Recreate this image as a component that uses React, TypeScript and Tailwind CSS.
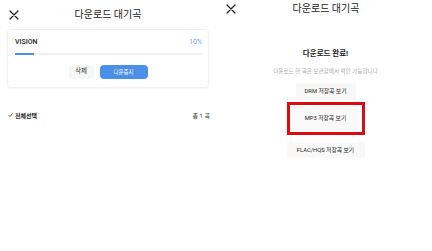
const font = "font-['Roboto','Noto_Sans_CJK_KR',sans-serif]";

function CloseIcon() {
  return (
    <svg width="10" height="10" viewBox="0 0 10 10" fill="none">
      <path d="M1 1L9 9M9 1L1 9" stroke="#222" strokeWidth="1.3" strokeLinecap="round" />
    </svg>
  );
}

function QueuePanel() {
  return (
    <div className="w-[216px] shrink-0">
      <header className="flex h-[29px] items-center pt-[1px]">
        <div className="flex w-[28px] justify-center">
          <CloseIcon />
        </div>
        <h1 className="flex-1 text-center text-[10px] leading-[12px] text-[#222]">다운로드 대기곡</h1>
        <div className="w-[28px]" />
      </header>

      <div className="mx-[7px] h-[59px] rounded-[4px] border border-[#f1f1f1] bg-white pt-[8px] shadow-[0_1px_2px_rgba(0,0,0,0.04)]">
        <div className="flex items-center justify-between pl-[7px] pr-[6px] leading-[8px]">
          <span className="text-[7px] font-medium text-[#222]">VISION</span>
          <span className="text-[7px] text-[#6aa5ef]">10%</span>
        </div>
        <div className="mx-[7px] mr-[6px] mt-[7px] h-[2px] bg-[#f0f0f0]">
          <div className="h-full w-[10%] bg-[#4b8fe8]" />
        </div>
        <div className="mt-[10px] flex justify-center gap-[6px]">
          <button className="flex h-[14px] w-[25px] items-center justify-center rounded-[3px] bg-[#f7f7f7] text-[6.5px] text-[#333]">
            삭제
          </button>
          <button className="flex h-[14px] w-[48px] items-center justify-center rounded-[4px] bg-[#4b8fe8] text-[5.5px] text-white">
            다운중지
          </button>
        </div>
      </div>

      <div className="mt-[20px] flex h-[14px] items-center justify-between pl-[8px] pr-[6px]">
        <div className="flex items-center gap-[2px]">
          <svg width="5" height="4" viewBox="0 0 5 4" fill="none">
            <path d="M0.5 2L2 3.5L4.5 0.5" stroke="#333" strokeWidth="0.8" />
          </svg>
          <span className="text-[6px] font-bold text-[#222]">전체선택</span>
        </div>
        <span className="text-[6px] text-[#333]">총 1 곡</span>
      </div>
    </div>
  );
}

function DonePanel() {
  return (
    <div className="w-[216px] shrink-0">
      <header className="flex h-[17px] items-center">
        <div className="flex w-[30px] justify-center">
          <CloseIcon />
        </div>
        <h1 className="flex-1 text-center text-[10px] leading-[12px] text-[#222]">다운로드 대기곡</h1>
        <div className="w-[26px]" />
      </header>

      <div className="flex flex-col items-center pl-[3px]">
        <p className="mt-[32px] text-[7.5px] font-bold leading-[10px] text-[#222]">다운로드 완료!</p>
        <p className="mt-[8px] text-[5.6px] leading-[8px] text-[#aaa]">다운로드 한 곡은 보관함에서 확인 가능합니다</p>

        <button className="mt-[8px] flex h-[17px] w-[60px] items-center justify-center bg-[#f8f8f8] text-[5.8px] text-[#222]">
          DRM 저장곡 보기
        </button>
        <div className="mt-[2px] flex h-[33px] w-[78px] items-center justify-center border-[3px] border-[#dc0a14]">
          <button className="flex h-[25px] w-[64px] items-center justify-center bg-[#f9f9f9] text-[5.8px] text-[#222]">
            MP3 저장곡 보기
          </button>
        </div>
        <button className="mt-[7px] flex h-[16px] w-[78px] items-center justify-center bg-[#f8f8f8] text-[5.8px] text-[#222]">
          FLAC/HQS 저장곡 보기
        </button>
      </div>
    </div>
  );
}

export default function App() {
  return (
    <div className={`flex h-[251px] w-[432px] bg-white ${font}`}>
      <QueuePanel />
      <DonePanel />
    </div>
  );
}
